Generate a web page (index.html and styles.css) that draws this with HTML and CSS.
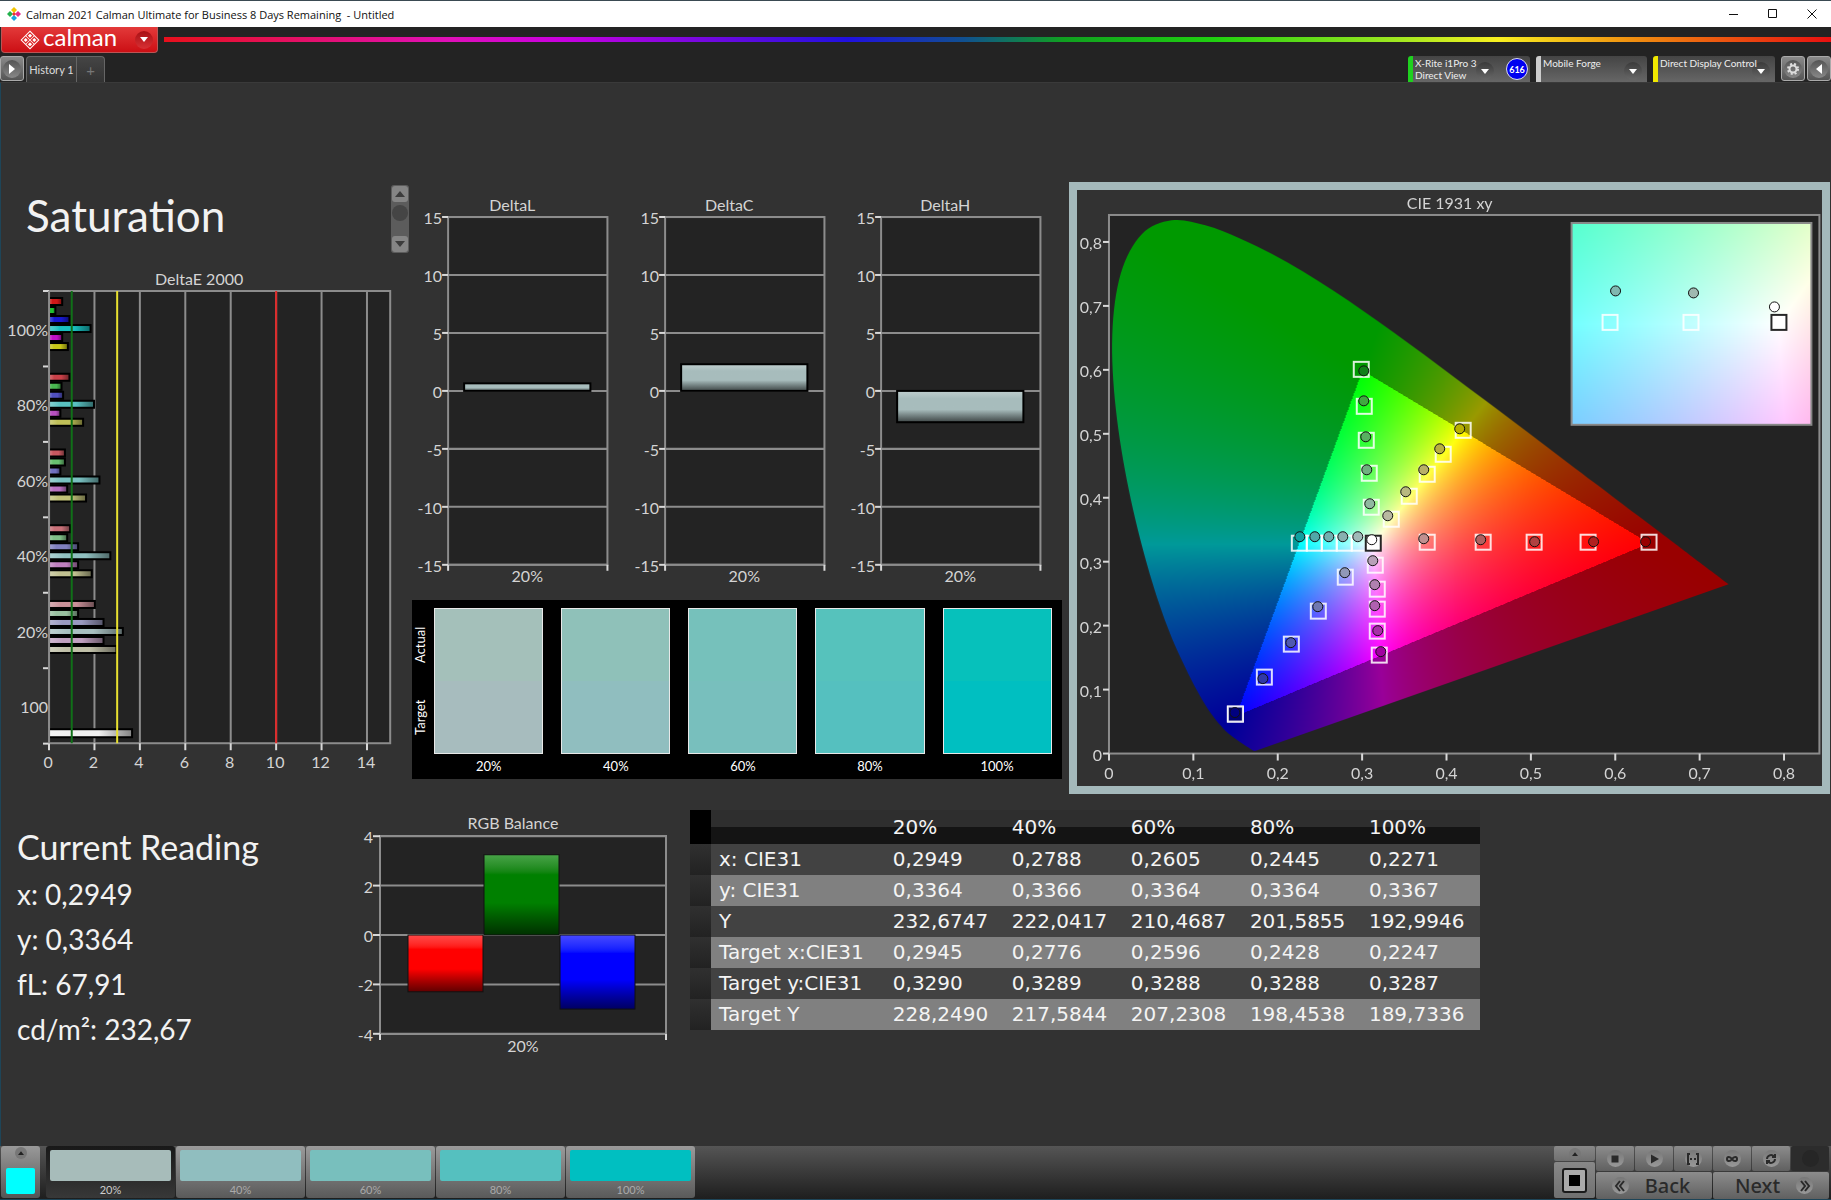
FILE: index.html
```html
<!DOCTYPE html>
<html lang="en">
<head>
  <meta charset="UTF-8">
  <meta name="viewport" content="width=device-width, initial-scale=1.0">
  <title>Calman 2021 Calman Ultimate for Business</title>
  <link rel="stylesheet" href="styles.css">
</head>
<body>
<div class="app">

  <!-- Window title -->
  <header class="titlebar">
    <svg class="app-icon" viewBox="0 0 14 14" aria-hidden="true">
      <path d="M7 0l3 3-3 3-3-3z" fill="#f2c400"/>
      <path d="M3 4l3 3-3 3-3-3z" fill="#22b14c"/>
      <path d="M11 4l3 3-3 3-3-3z" fill="#e5298c"/>
      <path d="M7 8l3 3-3 3-3-3z" fill="#18a4e0"/>
      <path d="M7 5l2 2-2 2-2-2z" fill="#e33"/>
    </svg>
    <span class="title-text">Calman 2021 Calman Ultimate for Business 8 Days Remaining&nbsp; - Untitled</span>
    <div class="window-buttons">
      <button aria-label="Minimize"><svg viewBox="0 0 10 10"><path d="M0 5.5h9"/></svg></button>
      <button aria-label="Maximize"><svg viewBox="0 0 10 10"><path d="M.5 .5h8v8h-8z"/></svg></button>
      <button aria-label="Close"><svg viewBox="0 0 10 10"><path d="M.5 .5l9 9M9.5 .5l-9 9"/></svg></button>
    </div>
  </header>

  <!-- Logo and spectrum -->
  <div class="brandbar">
    <button class="brand">
      <svg class="brand-icon" viewBox="0 0 20 20" aria-hidden="true">
        <path d="M10 .5L19.500 10 10 19.500.5 10z" fill="#fff"/>
        <path d="M10 2.800l2.900 2.900L10 8.600 7.100 5.700zM5.700 7.100L8.600 10l-2.900 2.900L2.800 10zM14.300 7.100l2.900 2.900-2.900 2.900L11.400 10zM10 11.400l2.900 2.900-2.900 2.900-2.900-2.900z" fill="none" stroke="#d22" stroke-width="1.200"/>
      </svg>
      <span class="brand-name">calman</span>
      <span class="knob knob-red"><svg viewBox="0 0 8 5"><path d="M0 0h8L4 5z"/></svg></span>
    </button>
    <div class="spectrum"></div>
  </div>

  <!-- Tabs and devices -->
  <div class="tabbar">
    <button class="square-btn" aria-label="Show panel"><span class="knob"><svg viewBox="0 0 6 10"><path d="M0 0l6 5-6 5z"/></svg></span></button>
    <nav class="tabs">
      <button class="tab">History 1</button>
      <button class="tab tab-add" aria-label="Add tab">+</button>
    </nav>
    <div class="devices">
      <div class="device device-meter">
        <div class="device-text">
          <select aria-label="Meter"><option>X-Rite i1Pro 3</option></select>
          <span>Direct View</span>
        </div>
        <span class="knob"><svg viewBox="0 0 8 5"><path d="M0 0h8L4 5z"/></svg></span>
        <span class="meter-badge">616</span>
      </div>
      <div class="device device-source">
        <div class="device-text"><select aria-label="Source"><option>Mobile Forge</option></select></div>
        <span class="knob"><svg viewBox="0 0 8 5"><path d="M0 0h8L4 5z"/></svg></span>
      </div>
      <div class="device device-display">
        <div class="device-text"><select aria-label="Display"><option>Direct Display Control</option></select></div>
        <span class="knob"><svg viewBox="0 0 8 5"><path d="M0 0h8L4 5z"/></svg></span>
      </div>
      <div class="side-buttons">
        <button class="square-btn" aria-label="Settings"><span class="knob"><svg class="gear" viewBox="0 0 12 12"><circle cx="6" cy="6" r="3.500"/><circle class="teeth" cx="6" cy="6" r="5"/></svg></span></button>
        <button class="square-btn" aria-label="Hide panel"><span class="knob"><svg viewBox="0 0 6 10"><path d="M6 0L0 5l6 5z"/></svg></span></button>
      </div>
    </div>
  </div>

  <main class="workspace">
    <section class="row-top">
      <div class="col-left">
        <div class="heading">
          <h1>Saturation</h1>
          <div class="scroller">
            <button aria-label="Up"><svg viewBox="0 0 10 6"><path d="M5 0l5 6H0z"/></svg></button>
            <span class="thumb"></span>
            <button aria-label="Down"><svg viewBox="0 0 10 6"><path d="M0 0h10L5 6z"/></svg></button>
          </div>
        </div>
        <svg class="chart" id="deltaE" viewBox="0 0 400 510" role="img" aria-label="DeltaE 2000"></svg>
      </div>

      <div class="col-middle">
        <div class="deltas">
          <svg class="chart" id="deltaL" viewBox="0 0 216 400"></svg>
          <svg class="chart" id="deltaC" viewBox="0 0 216 400"></svg>
          <svg class="chart" id="deltaH" viewBox="0 0 216 400"></svg>
        </div>
        <div class="compare">
          <div class="compare-side"><span>Target</span><span>Actual</span></div>
          <figure><div class="patch patch-20"></div><figcaption>20%</figcaption></figure>
          <figure><div class="patch patch-40"></div><figcaption>40%</figcaption></figure>
          <figure><div class="patch patch-60"></div><figcaption>60%</figcaption></figure>
          <figure><div class="patch patch-80"></div><figcaption>80%</figcaption></figure>
          <figure><div class="patch patch-100"></div><figcaption>100%</figcaption></figure>
        </div>
      </div>

      <div class="cie">
        <canvas id="cieColors" width="746" height="596"></canvas>
        <svg class="chart" id="cieChart" viewBox="0 0 746 596" role="img" aria-label="CIE 1931 xy"></svg>
      </div>
    </section>

    <section class="row-bottom">
      <div class="reading">
        <h2>Current Reading</h2>
        <p>x: 0,2949</p>
        <p>y: 0,3364</p>
        <p>fL: 67,91</p>
        <p>cd/m²: 232,67</p>
      </div>
      <svg class="chart" id="rgb" viewBox="0 0 350 260" role="img" aria-label="RGB Balance"></svg>
      <table class="results">
        <thead>
          <tr><td class="handle"></td><td></td><th>20%</th><th>40%</th><th>60%</th><th>80%</th><th>100%</th></tr>
        </thead>
        <tbody>
          <tr><td class="handle"></td><th>x: CIE31</th><td>0,2949</td><td>0,2788</td><td>0,2605</td><td>0,2445</td><td>0,2271</td></tr>
          <tr><td class="handle"></td><th>y: CIE31</th><td>0,3364</td><td>0,3366</td><td>0,3364</td><td>0,3364</td><td>0,3367</td></tr>
          <tr><td class="handle"></td><th>Y</th><td>232,6747</td><td>222,0417</td><td>210,4687</td><td>201,5855</td><td>192,9946</td></tr>
          <tr><td class="handle"></td><th>Target x:CIE31</th><td>0,2945</td><td>0,2776</td><td>0,2596</td><td>0,2428</td><td>0,2247</td></tr>
          <tr><td class="handle"></td><th>Target y:CIE31</th><td>0,3290</td><td>0,3289</td><td>0,3288</td><td>0,3288</td><td>0,3287</td></tr>
          <tr><td class="handle"></td><th>Target Y</th><td>228,2490</td><td>217,5844</td><td>207,2308</td><td>198,4538</td><td>189,7336</td></tr>
        </tbody>
      </table>
    </section>
  </main>

  <!-- Pattern strip and transport -->
  <footer class="dock">
    <button class="dock-color" aria-label="Current color">
      <span class="dock-knob"><svg viewBox="0 0 8 5"><path d="M0 5h8L4 0z"/></svg></span>
      <span class="dock-cyan"></span>
    </button>
    <div class="dock-patterns">
      <button class="pattern active"><span class="chip chip-20"></span>20%</button>
      <button class="pattern"><span class="chip chip-40"></span>40%</button>
      <button class="pattern"><span class="chip chip-60"></span>60%</button>
      <button class="pattern"><span class="chip chip-80"></span>80%</button>
      <button class="pattern"><span class="chip chip-100"></span>100%</button>
    </div>
    <div class="transport">
      <div class="mode">
        <button class="mode-up" aria-label="More"><span class="dock-knob"><svg viewBox="0 0 8 5"><path d="M0 5h8L4 0z"/></svg></span></button>
        <button class="mode-main" aria-label="Pattern window"><span></span></button>
      </div>
      <div class="keys">
        <button aria-label="Stop"><span class="key-knob"><svg viewBox="0 0 12 12"><path d="M2.500 2.500h7v7h-7z"/></svg></span></button>
        <button aria-label="Play"><span class="key-knob"><svg viewBox="0 0 12 12"><path d="M3 1.500l8 4.500-8 4.500z"/></svg></span></button>
        <button aria-label="Read series"><span class="key-knob"><svg class="line" viewBox="0 0 12 12"><path d="M3 1H1v10h2M9 1h2v10H9M3 6h2M7 6h2"/></svg></span></button>
        <button aria-label="Continuous"><span class="key-knob"><svg class="line" viewBox="0 0 12 12"><path d="M6 6C4 3 1 3.500 1 6s3 3 5 0 5-2.500 5 0-3 3-5 0z"/></svg></span></button>
        <button aria-label="Refresh"><span class="key-knob"><svg class="line" viewBox="0 0 12 12"><path d="M2 6a4 4 0 0 1 7-2.500M10 1v3H7M10 6a4 4 0 0 1-7 2.500M2 11V8h3"/></svg></span></button>
        <button class="key-off" aria-label="Unused" disabled><span class="key-knob"></span></button>
        <button class="nav-key"><span class="key-knob"><svg class="line" viewBox="0 0 12 12"><path d="M6 1L2 6l4 5M10 1L6 6l4 5"/></svg></span>Back</button>
        <button class="nav-key">Next<span class="key-knob"><svg class="line" viewBox="0 0 12 12"><path d="M2 1l4 5-4 5M6 1l4 5-4 5"/></svg></span></button>
      </div>
    </div>
  </footer>
</div>
<script src="charts.js"></script>
</body>
</html>
```
FILE: styles.css
```css
* {
  box-sizing: border-box;
}
body {
  margin: 0;
  background: #323232;
  color: #f2f2f2;
  font-family: Lato, "Open Sans", sans-serif;
}
button, select {
  margin: 0;
  padding: 0;
  border: 0;
  background: none;
  color: inherit;
  font: inherit;
}
h1, h2, p, figure {
  margin: 0;
  font-weight: 400;
}
svg {
  display: block;
}
.app {
  min-height: 100vh;
  display: flex;
  flex-direction: column;
  box-shadow: inset 1px 0 #1e4558;
}

/* title bar */
.titlebar {
  height: 27px;
  display: flex;
  align-items: center;
  gap: 5px;
  padding-left: 7px;
  border-top: 1px solid #3a4a52;
  background: #fff;
  color: #111;
  font: 11px "Open Sans", sans-serif;
}
.app-icon {
  width: 14px;
  height: 14px;
}
.window-buttons {
  display: flex;
  margin-left: auto;
}
.window-buttons button {
  width: 39px;
  height: 24px;
  display: grid;
  place-items: center;
}
.window-buttons svg {
  width: 10px;
  height: 10px;
  fill: none;
  stroke: #111;
}

/* brand row */
.brandbar {
  display: flex;
  align-items: center;
  gap: 6px;
  height: 27px;
  padding-left: 1px;
  background: #232323;
}
.brand {
  width: 157px;
  height: 26px;
  display: flex;
  align-items: center;
  gap: 3px;
  padding: 0 4px 0 18px;
  border: 1px solid #b55;
  border-top: 0;
  border-radius: 0 0 4px 4px;
  background: linear-gradient(#e33a3a, #cc0f14);
  align-self: flex-start;
}
.brand-icon {
  width: 20px;
  height: 20px;
}
.brand-name {
  margin-right: auto;
  color: #fff;
  font-size: 24px;
  line-height: 20px;
  padding-bottom: 5px;
}
.spectrum {
  flex: 1;
  height: 5px;
  margin-bottom: 2px;
  background: linear-gradient(90deg, #e8101c, #e010b8 17%, #c800e0 24%, #2010e0 41%, #105090 48%, #10a020 54%, #20d010 63%, #a0e820 74%, #f8f020 80%, #f09010 88%, #e81010);
}
.knob {
  width: 18px;
  height: 18px;
  flex: none;
  display: grid;
  place-items: center;
  border-radius: 50%;
  background: linear-gradient(#3a3a3a, #686868);
}
.knob svg {
  width: 8px;
  height: 5px;
  fill: #fff;
}
.square-btn .knob svg {
  width: 6px;
  height: 10px;
}
.knob-red {
  background: linear-gradient(#a81014, #d83034);
}

/* tabs and devices */
.tabbar {
  height: 29px;
  display: flex;
  align-items: flex-end;
  gap: 2px;
  background: #232323;
  border-bottom: 1px solid #3a3a3a;
}
.square-btn {
  width: 24px;
  height: 25px;
  margin-bottom: 1px;
  display: grid;
  place-items: center;
  border: 1px solid #aaa;
  border-radius: 3px;
  background: linear-gradient(#8a8a8a, #555);
}
.square-btn .knob {
  background: linear-gradient(#555, #888);
}
.square-btn .knob svg.gear {
  width: 12px;
  height: 12px;
  fill: none;
  stroke: #ddd;
  stroke-width: 2;
}
.gear .teeth {
  stroke-dasharray: 2 2;
}
.tabs {
  display: flex;
  border: 1px solid #666;
  border-bottom: 0;
  border-radius: 4px 4px 0 0;
  background: linear-gradient(#454545, #333);
}
.tab {
  height: 25px;
  width: 49px;
  color: #ddd;
  font-size: 11px;
}
.tab-add {
  width: 28px;
  border-left: 1px solid #666;
  color: #777;
  font-size: 15px;
}
.devices {
  display: flex;
  align-items: flex-end;
  gap: 6px;
  margin-left: auto;
}
.device {
  width: 111px;
  height: 26px;
  display: flex;
  align-items: center;
  padding-right: 5px;
  border-left: 5px solid #ccc;
  border-radius: 3px 3px 0 0;
  background: linear-gradient(#444, #666);
}
.device-meter {
  width: 122px;
  padding-right: 2px;
  border-left-color: #1fd01f;
}
.device-display {
  width: 122px;
  border-left-color: #f0e800;
}
/* long names run over the edge of the arrow knob */
.device-text {
  position: relative;
  z-index: 1;
  flex: 1;
  min-width: 0;
  align-self: flex-start;
  padding: 1px 0 0 2px;
  color: #eee;
  font-size: 10px;
  line-height: 12px;
  white-space: nowrap;
}
.device-text select, .device-text span {
  display: block;
  appearance: none;
  height: 12px;
  width: max-content;
}
.device .knob {
  margin-top: 4px;
}
.meter-badge {
  width: 22px;
  height: 22px;
  margin-left: 12px;
  display: grid;
  place-items: center;
  border: 1px solid #dde;
  border-radius: 50%;
  background: #0000f0;
  color: #fff;
  font-size: 9px;
  font-weight: 700;
}
.side-buttons {
  display: flex;
  gap: 2px;
}

/* workspace */
.workspace {
  flex: 1;
  padding-top: 99px;
}
.row-top {
  display: grid;
  grid-template-columns: 400fr 668fr 761fr;
  align-items: start;
  margin-right: 1px;
}
.heading {
  display: flex;
  justify-content: space-between;
  height: 88px;
  padding: 3px 0 0 26px;
}
h1 {
  font-size: 44px;
  line-height: 60px;
}
.scroller {
  width: 18px;
  height: 68px;
  margin-right: -9px;
  display: flex;
  flex-direction: column;
  align-items: center;
  padding: 1px;
  border-radius: 3px;
  background: #5c5c5c;
}
.scroller button {
  width: 16px;
  height: 16px;
  display: grid;
  place-items: center;
  border-radius: 3px;
  background: #858585;
}
.scroller svg {
  width: 10px;
  height: 6px;
  fill: #3c3c3c;
}
.thumb {
  width: 16px;
  height: 16px;
  margin: 3px 0 auto;
  border-radius: 50%;
  background: #454545;
}
.chart {
  width: 100%;
  height: auto;
  overflow: visible;
}
.chart text {
  fill: #d4d4d4;
  font-size: 16px;
}
.grid {
  stroke: #8c8c8c;
  stroke-width: 2;
  fill: none;
}
.plot {
  fill: #232323;
}
.tick {
  stroke: #d8d8d8;
  stroke-width: 2;
}
.mid {
  text-anchor: middle;
}
.end {
  text-anchor: end;
}
.deltas {
  display: grid;
  grid-template-columns: repeat(3, 1fr);
  margin-right: 19px;
  padding-top: 13px;
}
.compare {
  display: grid;
  grid-template-columns: 22px repeat(4, 127fr) 119fr;
  margin: 4px 7px 0 12px;
  padding: 8px 0 5px;
  background: #000;
}
.compare figure {
  padding-right: 18px;
}
.compare figure:last-child {
  padding-right: 10px;
}
.compare-side {
  display: flex;
  writing-mode: vertical-rl;
  transform: rotate(180deg);
  padding: 20px 0 0 4px;
  font-size: 13px;
  line-height: 16px;
  color: #fff;
}
.compare-side span {
  flex: 1;
  text-align: center;
}
.patch {
  height: 146px;
  border: 1px solid #e8e8e8;
}
.patch-20 { background: linear-gradient(#a4c0ba 50%, #a7bcbe 50%); }
.patch-40 { background: linear-gradient(#8fc1b9 50%, #90bebf 50%); }
.patch-60 { background: linear-gradient(#76c1bb 50%, #78bfbd 50%); }
.patch-80 { background: linear-gradient(#56c2bc 50%, #55c0bf 50%); }
.patch-100 { background: linear-gradient(#06c1bb 50%, #00bfc1 50%); }
.compare figcaption {
  padding-top: 4px;
  color: #fff;
  font-size: 13px;
  line-height: 16px;
  text-align: center;
}

/* CIE diagram, colour field below the axes */
.cie {
  display: grid;
  border: 8px solid #a4b9bb;
}
.cie > * {
  grid-area: 1 / 1;
  width: 100%;
}
.cie canvas {
  display: block;
  background: #323232;
}
.target {
  fill: none;
  stroke: #fff;
  stroke-width: 2;
  stroke-opacity: .85;
}
.target-white {
  stroke: #000;
}
.actual {
  stroke: #111;
  stroke-width: 1;
}
.inset-frame {
  fill: none;
  stroke: #888;
  stroke-width: 2;
}

/* lower row */
.row-bottom {
  display: grid;
  grid-template-columns: 340fr 350fr 790fr 351fr;
  align-items: start;
  padding-top: 6px;
}
.reading {
  padding: 22px 0 0 17px;
  font-size: 28px;
  line-height: 45px;
}
.reading h2 {
  font-size: 34px;
  line-height: 50px;
}
.results {
  width: 100%;
  margin-top: 10px;
  border-collapse: collapse;
  table-layout: fixed;
  color: #f4f4f4;
  font-family: "DejaVu Sans", sans-serif;
  font-size: 20px;
  line-height: 30px;
}
.results th, .results td {
  height: 31px;
  padding: 0 0 0 8px;
  font-weight: 400;
  text-align: left;
  white-space: nowrap;
}
.results tr > :nth-child(1) { width: 21px; }
.results tr > :nth-child(2) { width: 22%; }
.results thead tr {
  height: 34px;
  background: linear-gradient(#2e2e2e 50%, #141414 50%);
}
.results thead .handle {
  background: #000;
}
.results tbody tr {
  background: #424242;
}
.results tbody tr:nth-child(even) {
  background: #808080;
}
.results tbody .handle {
  background: linear-gradient(#303030, #222);
}

/* dock */
.dock {
  display: flex;
  height: 54px;
  gap: 6px;
  padding: 0 2px 1px 1px;
  border-bottom: 1px solid #1e4558;
  background: linear-gradient(#555, #1e1e1e);
}
.dock-color {
  width: 39px;
  display: flex;
  flex-direction: column;
  align-items: center;
  justify-content: space-between;
  padding: 1px 0 4px;
  border-radius: 3px;
  background: linear-gradient(#999, #555);
}
.dock-knob {
  width: 12px;
  height: 12px;
  display: grid;
  place-items: center;
  border-radius: 50%;
  background: #777;
}
.dock-knob svg {
  width: 6px;
  height: 4px;
  fill: #222;
}
.dock-cyan {
  width: 29px;
  height: 26px;
  border-radius: 2px;
  background: #0ff;
}
.dock-patterns {
  display: flex;
  gap: 1px;
}
.pattern {
  width: 129px;
  padding: 4px 4px 0;
  border-radius: 3px;
  background: linear-gradient(#9a9a9a, #5a5a5a);
  color: #aaa;
  font-size: 11px;
  line-height: 17px;
}
.pattern.active {
  background: linear-gradient(#181818, #383838);
  color: #ccc;
}
.chip {
  display: block;
  height: 31px;
  border-radius: 2px;
}
.chip-20 { background: #a7bcba; }
.chip-40 { background: #90bebf; }
.chip-60 { background: #78bfbd; }
.chip-80 { background: #55c0bf; }
.chip-100 { background: #00bfc1; }
.transport {
  display: flex;
  gap: 1px;
  margin-left: auto;
}
.mode {
  width: 41px;
  display: flex;
  flex-direction: column;
  gap: 1px;
}
.mode button {
  display: grid;
  place-items: center;
  border-radius: 2px;
  background: linear-gradient(#888, #707070);
}
.mode-up {
  height: 15px;
}
.mode-main {
  flex: 1;
}
.mode-main span {
  width: 25px;
  height: 25px;
  border: 2px solid #1a1a1a;
  border-radius: 3px;
  background: linear-gradient(#000, #000) center / 11px 11px no-repeat #aaa;
}
.keys {
  display: grid;
  grid-template-columns: repeat(6, 38px);
  grid-template-rows: 25px 1fr;
  gap: 1px;
}
.keys button {
  display: flex;
  align-items: center;
  justify-content: center;
  border-radius: 2px;
  background: linear-gradient(#8c8c8c, #606060);
  color: #2a2a2a;
}
.keys .key-off {
  background: #2c2c2c;
}
.key-knob {
  width: 17px;
  height: 17px;
  display: grid;
  place-items: center;
  border-radius: 50%;
  background: linear-gradient(#777, #999);
}
.key-off .key-knob {
  background: #262626;
}
.key-knob svg {
  width: 12px;
  height: 12px;
  fill: #2a2a2a;
}
.key-knob svg.line {
  fill: none;
  stroke: #2a2a2a;
  stroke-width: 2;
}
.keys .nav-key {
  grid-column: span 3;
  gap: 16px;
  padding-right: 6px;
  font: 500 20px "Noto Sans", sans-serif;
}
.keys .nav-key:last-child {
  padding: 0 0 0 6px;
}
```
FILE: charts.js
```js
const NS = 'http://www.w3.org/2000/svg';

function add(svg, name, attrs, text) {
  const el = document.createElementNS(NS, name);
  for (const key in attrs) el.setAttribute(key, attrs[key]);
  if (text !== undefined) el.textContent = text;
  svg.appendChild(el);
  return el;
}

function line(svg, x1, y1, x2, y2, cls, stroke) {
  const el = add(svg, 'line', { x1, y1, x2, y2, class: cls });
  if (stroke) el.setAttribute('style', 'stroke:' + stroke);
}

// Glossy fill, vertical for columns and horizontal for bars
function gloss(svg, id, color, horizontal) {
  const g = add(svg, 'linearGradient', horizontal ? { id } : { id, x2: 0, y2: 1 });
  const dark = `color-mix(in srgb, ${color} ${horizontal ? 55 : 38}%, #000)`;
  const light = `color-mix(in srgb, ${color} 72%, #fff)`;
  add(g, 'stop', { offset: 0, 'stop-color': light });
  add(g, 'stop', { offset: 0.25, 'stop-color': color });
  add(g, 'stop', { offset: 0.6, 'stop-color': color });
  add(g, 'stop', { offset: 1, 'stop-color': dark });
  return `url(#${id})`;
}

// ---- DeltaE 2000 ----
function drawDeltaE() {
  const svg = document.getElementById('deltaE');
  const x = v => 49 + v * 22.7;
  add(svg, 'text', { x: 199, y: 15, class: 'mid' }, 'DeltaE 2000');
  add(svg, 'rect', { x: 49, y: 21, width: 341, height: 452, class: 'grid plot' });
  for (let v = 0; v <= 14; v += 2) {
    line(svg, x(v), 21, x(v), 473, 'grid');
    line(svg, x(v), 473, x(v), 480, 'tick');
    add(svg, 'text', { x: x(v) - 1, y: 498, class: 'mid' }, v);
  }
  ['100%', '80%', '60%', '40%', '20%', '100'].forEach((label, i) => {
    add(svg, 'text', { x: 48, y: 66 + i * 75.4, class: 'end' }, label);
  });
  for (let i = 0; i <= 6; i++) line(svg, 43, 21 + i * 75.4, 49, 21 + i * 75.4, 'tick');

  const groups = [
    [[0.58, '#d01818'], [0.28, '#20c030'], [0.9, '#1818d0'], [1.83, '#18c0c0'], [0.58, '#c010c8'], [0.83, '#c8c818']],
    [[0.9, '#c84048'], [0.55, '#48b850'], [0.62, '#5050c0'], [1.98, '#58c0c0'], [0.5, '#b850c0'], [1.5, '#c0c058']],
    [[0.7, '#c85860'], [0.7, '#68c070'], [0.5, '#7070c0'], [2.22, '#78c0c0'], [0.8, '#b870c0'], [1.63, '#c0c078']],
    [[0.93, '#c87078'], [0.8, '#80c088'], [1.28, '#8080c0'], [2.7, '#90c0c0'], [1.28, '#c080c0'], [1.88, '#c0c090']],
    [[2.02, '#c89098'], [1.28, '#98c0a0'], [2.4, '#9a9ac0'], [3.25, '#a8c0c0'], [2.4, '#c0a0c0'], [2.97, '#c0c0a8']]
  ];
  groups.forEach((bars, g) => {
    bars.forEach(([v, color], i) => {
      add(svg, 'rect', {
        x: 49, y: 28 + g * 75.7 + i * 9, width: v * 22.7, height: 7,
        fill: gloss(svg, `e${g}${i}`, color, true), stroke: '#000', 'stroke-width': 2
      });
    });
  });
  add(svg, 'rect', { x: 49, y: 459, width: 83, height: 8, fill: gloss(svg, 'ew', '#f0f0f0', true), stroke: '#000', 'stroke-width': 2 });

  // tolerance lines
  line(svg, x(1), 21, x(1), 473, 'grid', '#107018');
  line(svg, x(3), 21, x(3), 473, 'grid', '#e8e030');
  line(svg, x(10), 21, x(10), 473, 'grid', '#e02828');
  line(svg, 49, 21, 49, 473, 'grid');
}

// ---- DeltaL / DeltaC / DeltaH ----
function drawDelta(id, title, value) {
  const svg = document.getElementById(id);
  const y = v => 195.500 - v * 11.57;
  add(svg, 'text', { x: 112, y: 16, class: 'mid' }, title);
  add(svg, 'rect', { x: 48, y: 22, width: 159, height: 347, class: 'grid plot' });
  for (let v = 15; v >= -15; v -= 5) {
    line(svg, 48, y(v), 207, y(v), 'grid');
    line(svg, 42, y(v), 48, y(v), 'tick');
    add(svg, 'text', { x: 42, y: y(v) + 7, class: 'end' }, v);
  }
  line(svg, 48, 369, 48, 375, 'tick');
  line(svg, 207, 369, 207, 375, 'tick');
  add(svg, 'text', { x: 127, y: 386, class: 'mid' }, '20%');
  add(svg, 'rect', {
    x: 64, y: y(Math.max(value, 0)), width: 126, height: Math.abs(value) * 11.57,
    fill: gloss(svg, id + 'fill', '#a7bcbc', false), stroke: '#000', 'stroke-width': 2
  });
}

// ---- RGB Balance ----
function drawRGB() {
  const svg = document.getElementById('rgb');
  const y = v => 135 - v * 24.7;
  add(svg, 'text', { x: 173, y: 29, class: 'mid' }, 'RGB Balance');
  add(svg, 'rect', { x: 40, y: 36, width: 286, height: 198, class: 'grid plot' });
  for (let v = 4; v >= -4; v -= 2) {
    line(svg, 40, y(v), 326, y(v), 'grid');
    line(svg, 33, y(v), 40, y(v), 'tick');
    add(svg, 'text', { x: 33, y: y(v) + 7, class: 'end' }, v);
  }
  line(svg, 40, 234, 40, 240, 'tick');
  line(svg, 326, 234, 326, 240, 'tick');
  add(svg, 'text', { x: 183, y: 252, class: 'mid' }, '20%');
  [['#ff0000', -2.3], ['#008000', 3.25], ['#0000ff', -3]].forEach(([color, v], i) => {
    add(svg, 'rect', {
      x: 68 + i * 76, y: y(Math.max(v, 0)), width: 75, height: Math.abs(v) * 24.7,
      fill: gloss(svg, 'rgb' + i, color, false), stroke: '#111', 'stroke-width': 1
    });
  });
}

// ---- CIE 1931 xy ----
const cx = x => 32 + x * 844.5;
const cy = y => 564 - y * 640;

// Spectral locus, 380 to 700 nm
const locus = [
  [0.1741, 0.005], [0.1733, 0.0048], [0.1714, 0.0051], [0.1689, 0.0069], [0.1644, 0.0109],
  [0.1566, 0.0177], [0.144, 0.0297], [0.1355, 0.0399], [0.1241, 0.0578], [0.1096, 0.0868],
  [0.0913, 0.1327], [0.0687, 0.2007], [0.0454, 0.295], [0.0235, 0.4127], [0.0082, 0.5384],
  [0.0039, 0.6548], [0.0139, 0.7502], [0.0389, 0.812], [0.0743, 0.8338], [0.1142, 0.8262],
  [0.1547, 0.8059], [0.1929, 0.7816], [0.2296, 0.7543], [0.2658, 0.7243], [0.3016, 0.6923],
  [0.3373, 0.6589], [0.3731, 0.6245], [0.4087, 0.5896], [0.4441, 0.5547], [0.4788, 0.5202],
  [0.5125, 0.4866], [0.5448, 0.4544], [0.5752, 0.4242], [0.6029, 0.3965], [0.627, 0.3725],
  [0.6482, 0.3514], [0.6658, 0.334], [0.6915, 0.3083], [0.714, 0.2859], [0.726, 0.274], [0.7347, 0.2653]
];

function chromaColor(x, y) {
  const X = x / y, Z = (1 - x - y) / y;
  const rgb = [
    3.2406 * X - 1.5372 - 0.4986 * Z,
    -0.9689 * X + 1.8758 + 0.0415 * Z,
    0.0557 * X - 0.204 + 1.057 * Z
  ];
  const outside = Math.min(...rgb) < 0;
  const top = Math.max(...rgb);
  return rgb.map(c => Math.max(c, 0) / top * (outside ? 153 : 255));
}

function colorField(left, top, width, height, toXY) {
  const field = document.createElement('canvas');
  field.width = width;
  field.height = height;
  const ctx = field.getContext('2d');
  const image = ctx.createImageData(width, height);
  for (let j = 0; j < height; j++) {
    for (let i = 0; i < width; i++) {
      const [x, y] = toXY(left + i, top + j);
      const [r, g, b] = chromaColor(x, Math.max(y, 0.001));
      const k = (j * width + i) * 4;
      image.data[k] = r;
      image.data[k + 1] = g;
      image.data[k + 2] = b;
      image.data[k + 3] = 255;
    }
  }
  ctx.putImageData(image, 0, 0);
  return field;
}

function drawCIEColors() {
  const ctx = document.getElementById('cieColors').getContext('2d');
  ctx.fillStyle = '#232323';
  ctx.fillRect(32, 25, 711, 539);

  // smooth curve through every locus point, closed by the purple line
  const pts = locus.map(([x, y]) => [cx(x), cy(y)]);
  const last = pts.length - 1;
  ctx.save();
  ctx.beginPath();
  ctx.moveTo(...pts[0]);
  for (let i = 0; i < last; i++) {
    const a = pts[Math.max(i - 1, 0)], b = pts[i], c = pts[i + 1], d = pts[Math.min(i + 2, last)];
    ctx.bezierCurveTo(
      b[0] + (c[0] - a[0]) / 6, b[1] + (c[1] - a[1]) / 6,
      c[0] - (d[0] - b[0]) / 6, c[1] - (d[1] - b[1]) / 6,
      c[0], c[1]
    );
  }
  ctx.closePath();
  ctx.clip();
  ctx.drawImage(colorField(32, 25, 640, 539, (px, py) => [(px - 32) / 844.5, (564 - py) / 640]), 32, 25);
  ctx.restore();

  // magnified area round the white point
  const zoom = colorField(0, 0, 240, 202, (px, py) => [0.2696 + px * 0.000208, 0.3541 - py * 0.000251]);
  ctx.drawImage(zoom, 495, 33);
}

function drawCIEChart() {
  const svg = document.getElementById('cieChart');
  add(svg, 'text', { x: 373, y: 19, class: 'mid' }, 'CIE 1931 xy');
  add(svg, 'rect', { x: 32, y: 25, width: 711, height: 539, class: 'grid' });
  for (let i = 0; i <= 8; i++) {
    const label = i ? '0,' + i : '0';
    line(svg, cx(i / 10), 564, cx(i / 10), 571, 'tick');
    line(svg, 26, cy(i / 10), 32, cy(i / 10), 'tick');
    add(svg, 'text', { x: cx(i / 10), y: 589, class: 'mid' }, label);
    add(svg, 'text', { x: 25, y: cy(i / 10) + 7, class: 'end' }, label);
  }

  // [target x, target y, actual x, actual y, fill]
  const points = [
    [284, 179, 287, 181, '#108018'], [287, 216, 287, 211, '#40a840'], [289, 250, 289, 247, '#58b060'], [292, 283, 290, 280, '#70b080'], [294, 317, 293, 314, '#90b8a0'],
    [386, 240, 383, 239, '#b8b000'], [366, 264, 363, 259, '#b8b040'], [350, 284, 347, 280, '#b8b068'], [332, 306, 329, 302, '#b8b880'], [314, 329, 311, 326, '#b8b8a0'],
    [222, 353, 223, 347, '#10a0a0'], [237, 353, 238, 347, '#50a8a8'], [252, 353, 252, 347, '#70b0b0'], [267, 353, 266, 347, '#88b0b0'], [282, 353, 281, 347, '#a0b8b8'],
    [350, 352, 347, 349, '#c09090'], [406, 352, 404, 350, '#b06060'], [457, 352, 458, 352, '#b04040'], [511, 352, 517, 352, '#b02020'], [572, 352, 569, 352, '#980000'],
    [298, 375, 296, 371, '#b8a0b8'], [300, 399, 298, 395, '#b080b0'], [300, 419, 298, 416, '#b060b0'], [300, 441, 301, 441, '#a830a8'], [302, 465, 304, 462, '#a000a0'],
    [268, 387, 268, 383, '#9098b8'], [241, 421, 241, 417, '#7078b0'], [214, 454, 214, 453, '#5058b0'], [187, 487, 186, 489, '#3038a8'], [158, 524, 158, 523, '#000080']
  ];
  const square = (x, y, cls, fill) => {
    add(svg, 'rect', { x: x - 7, y: y - 7, width: 15, height: 15, class: cls, style: fill ? 'fill:' + fill : '' });
  };
  points.forEach(([tx, ty]) => square(tx, ty, 'target'));
  square(158, 524, 'target', '#000070');
  square(296, 353, 'target target-white', '#fff');
  points.forEach(([, , ax, ay, fill]) => {
    add(svg, 'circle', { cx: ax, cy: ay, r: 5, fill, class: 'actual' });
  });
  add(svg, 'circle', { cx: 295, cy: 350, r: 5, fill: '#fff', class: 'actual' });

  add(svg, 'rect', { x: 495, y: 33, width: 240, height: 202, class: 'inset-frame' });
  square(533, 132, 'target');
  square(614, 132, 'target');
  square(702, 132, 'target target-white', '#fff');
  add(svg, 'circle', { cx: 539, cy: 101, r: 5, fill: '#80b8b0', class: 'actual' });
  add(svg, 'circle', { cx: 617, cy: 103, r: 5, fill: '#a0b8b0', class: 'actual' });
  add(svg, 'circle', { cx: 698, cy: 117, r: 5, fill: '#fff', class: 'actual' });
}

drawDeltaE();
drawDelta('deltaL', 'DeltaL', 0.65);
drawDelta('deltaC', 'DeltaC', 2.3);
drawDelta('deltaH', 'DeltaH', -2.7);
drawRGB();
drawCIEColors();
drawCIEChart();
```
